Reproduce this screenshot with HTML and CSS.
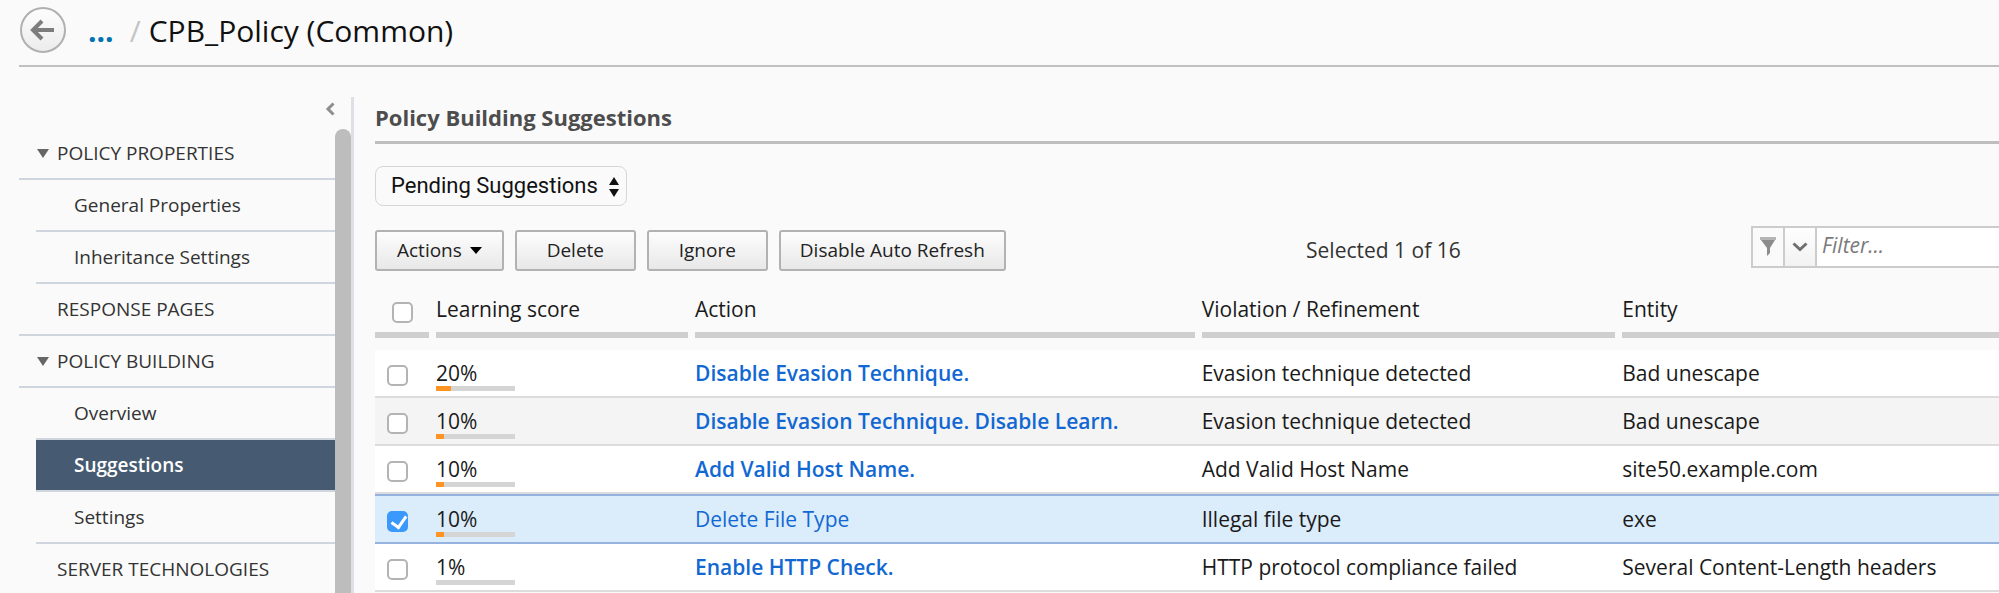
FILE: index.html
```html
<!DOCTYPE html>
<html lang="en">
<head>
<meta charset="utf-8">
<title>CPB_Policy (Common)</title>
<link rel="stylesheet" href="styles.css">
</head>
<body>
<header class="topbar">
  <button class="back" type="button" aria-label="Back">
    <svg viewBox="0 0 42 42" fill="none" stroke="#7d7d7d" stroke-width="4"><path d="M32 21H11M20 12L11 21L20 30"/></svg>
  </button>
  <a class="crumb" href="#">...</a>
  <span class="slash">/</span>
  <h1 class="page-title">CPB_Policy (Common)</h1>
</header>
<div class="layout">
  <nav class="sidebar">
    <button class="collapse" type="button" aria-label="Collapse menu">
      <svg viewBox="0 0 10 14" fill="none" stroke="#8e8e8e" stroke-width="3"><path d="M8.500 1.500L3 7L8.500 12.500"/></svg>
    </button>
    <ul class="menu">
      <li class="group"><a class="open" href="#">POLICY PROPERTIES</a></li>
      <li class="item"><a href="#">General Properties</a></li>
      <li class="item"><a href="#">Inheritance Settings</a></li>
      <li class="group"><a href="#">RESPONSE PAGES</a></li>
      <li class="group"><a class="open" href="#">POLICY BUILDING</a></li>
      <li class="item"><a href="#">Overview</a></li>
      <li class="item current"><a href="#">Suggestions</a></li>
      <li class="item"><a href="#">Settings</a></li>
      <li class="group"><a href="#">SERVER TECHNOLOGIES</a></li>
    </ul>
  </nav>
  <div class="track"></div>
  <main class="main">
    <h2 class="section-title">Policy Building Suggestions</h2>
    <div class="view">
      <select class="view-select" aria-label="Suggestions view"><option>Pending Suggestions</option></select>
      <svg class="view-arrows" viewBox="0 0 10 20" fill="#111"><path d="M5 0L10 8H0ZM0 12H10L5 20Z"/></svg>
    </div>
    <div class="toolbar">
      <div class="buttons">
        <button class="btn btn-menu" type="button">Actions <svg class="caret" viewBox="0 0 12 7"><path d="M0 0H12L6 7Z"/></svg></button>
        <button class="btn" type="button">Delete</button>
        <button class="btn" type="button">Ignore</button>
        <button class="btn" type="button">Disable Auto Refresh</button>
      </div>
      <span class="status">Selected 1 of 16</span>
      <div class="filter">
        <button class="filter-icon" type="button" aria-label="Filter">
          <svg viewBox="0 0 16 19" fill="#8c8c8c"><path fill="#b5b5b5" d="M0 0H16V3H0Z"/><path d="M1 3H15L10 11V16L7 19V11Z"/></svg>
        </button>
        <button class="filter-more" type="button" aria-label="Filter options">
          <svg viewBox="0 0 16 10" fill="none" stroke="#6f6f6f" stroke-width="3"><path d="M1.500 1.500L8 7.500L14.500 1.500"/></svg>
        </button>
        <input class="filter-text" type="text" placeholder="Filter..." aria-label="Filter text">
      </div>
    </div>
    <table class="grid">
      <colgroup><col class="c-check"><col class="c-score"><col class="c-action"><col class="c-violation"><col></colgroup>
      <thead>
        <tr>
          <th><div class="head head-check"><input class="check" type="checkbox" aria-label="Select all"></div></th>
          <th><div class="head">Learning score</div></th>
          <th><div class="head">Action</div></th>
          <th><div class="head">Violation / Refinement</div></th>
          <th><div class="head">Entity</div></th>
        </tr>
      </thead>
      <tbody>
        <tr>
          <td class="pick"><input class="check" type="checkbox" aria-label="Disable Evasion Technique"></td>
          <td>20%<div class="meter"><div class="fill" style="width:19%"></div></div></td>
          <td><a class="link" href="#">Disable Evasion Technique.</a></td>
          <td>Evasion technique detected</td>
          <td>Bad unescape</td>
        </tr>
        <tr class="alt">
          <td class="pick"><input class="check" type="checkbox" aria-label="Disable Evasion Technique, Disable Learn"></td>
          <td>10%<div class="meter"><div class="fill" style="width:10%"></div></div></td>
          <td><a class="link" href="#">Disable Evasion Technique. Disable Learn.</a></td>
          <td>Evasion technique detected</td>
          <td>Bad unescape</td>
        </tr>
        <tr>
          <td class="pick"><input class="check" type="checkbox" aria-label="Add Valid Host Name"></td>
          <td>10%<div class="meter"><div class="fill" style="width:10%"></div></div></td>
          <td><a class="link" href="#">Add Valid Host Name.</a></td>
          <td>Add Valid Host Name</td>
          <td>site50.example.com</td>
        </tr>
        <tr class="selected">
          <td class="pick"><input class="check" type="checkbox" aria-label="Delete File Type" checked></td>
          <td>10%<div class="meter"><div class="fill" style="width:10%"></div></div></td>
          <td><a class="link" href="#">Delete File Type</a></td>
          <td>Illegal file type</td>
          <td>exe</td>
        </tr>
        <tr>
          <td class="pick"><input class="check" type="checkbox" aria-label="Enable HTTP Check"></td>
          <td>1%<div class="meter"></div></td>
          <td><a class="link" href="#">Enable HTTP Check.</a></td>
          <td>HTTP protocol compliance failed</td>
          <td>Several Content-Length headers</td>
        </tr>
      </tbody>
    </table>
  </main>
</div>
</body>
</html>
```
FILE: styles.css
```css
* {
  box-sizing: border-box;
}

body {
  margin: 0;
  height: 100vh;
  display: flex;
  flex-direction: column;
  background: #fafafa;
  color: #1a1a1a;
  font-family: "Open Sans", "Liberation Sans", sans-serif;
  font-size: 21px;
  line-height: 27px;
}

button,
input,
select {
  margin: 0;
  font-family: inherit;
  font-size: inherit;
  line-height: inherit;
  color: inherit;
}

a {
  text-decoration: none;
}

svg {
  display: block;
}

/* Header */
.topbar {
  display: flex;
  flex: none;
  align-items: center;
  height: 67px;
  margin-left: 19px;
  padding: 0 0 5px 1px;
  border-bottom: 2px solid #c0c0c0;
}

.back {
  width: 46px;
  height: 46px;
  padding: 0;
  border: 2px solid #b0b0b0;
  border-radius: 50%;
  background: linear-gradient(#fdfdfd, #ececec);
}

.back svg {
  width: 42px;
  height: 42px;
}

.crumb {
  margin-left: 22px;
  color: #0072b0;
  font-size: 30px;
  font-weight: 700;
}

.slash {
  margin-left: 16px;
  color: #c4c4c4;
  font-size: 30px;
}

.page-title {
  margin: 0 0 0 8px;
  color: #111;
  font-size: 30px;
  font-weight: 400;
}

/* Layout */
.layout {
  display: flex;
  flex: 1;
  min-height: 0;
  overflow: hidden;
  padding-top: 30px;
}

.sidebar {
  flex: none;
  width: 335px;
  padding-left: 19px;
}

.collapse {
  display: block;
  margin: 5px 0 12px auto;
  padding: 0;
  border: 0;
  background: none;
}

.collapse svg {
  width: 10px;
  height: 14px;
}

.track {
  flex: none;
  width: 19px;
  border-right: 3px solid #dde1e6;
}

.track::before {
  content: "";
  display: block;
  height: 100%;
  margin-top: 32px;
  border-radius: 8px 8px 0 0;
  background: #bdbdbd;
}

.menu {
  margin: 0;
  padding: 0;
  list-style: none;
  font-size: 19px;
}

.menu a {
  display: flex;
  align-items: center;
  height: 52px;
  padding-top: 1px;
  color: #333;
  border-bottom: 2px solid #d0d6dd;
}

.group a {
  padding-left: 38px;
}

.group .open {
  padding-left: 18px;
}

.open::before {
  content: "";
  margin-right: 8px;
  border: 6px solid transparent;
  border-top: 9px solid #666;
  border-bottom: 0;
}

.item {
  margin-left: 17px;
}

.item a {
  padding-left: 38px;
}

.current a {
  background: #465b71;
  color: #fff;
  font-weight: 600;
}

/* Main */
.main {
  flex: 1;
  min-width: 0;
  padding-left: 21px;
}

.section-title {
  margin: 0 0 22px;
  padding: 7px 0 10px;
  border-bottom: 3px solid #bebebe;
  color: #4d4d4d;
  font-size: 22px;
  font-weight: 700;
}

.view {
  position: relative;
  width: 252px;
  margin-bottom: 24px;
}

.view-select {
  display: block;
  appearance: none;
  width: 100%;
  height: 40px;
  padding: 0 28px 1px 15px;
  border: 1px solid #d6d6d6;
  border-radius: 8px;
  background: #fafafa;
  color: #111;
  font-family: Roboto, "Liberation Sans", sans-serif;
  font-size: 22px;
}

.view-arrows {
  position: absolute;
  top: 11px;
  right: 8px;
  width: 10px;
  height: 20px;
  pointer-events: none;
}

.toolbar {
  display: flex;
  align-items: center;
  margin-bottom: 23px;
}

.buttons {
  display: flex;
  gap: 11px;
}

.btn {
  min-width: 121px;
  height: 41px;
  padding: 0 19px;
  border: 2px solid #b2b2b2;
  border-radius: 3px;
  background: linear-gradient(#fdfdfd, #e8e8e8);
  color: #222;
  font-size: 19px;
}

.btn-menu {
  display: flex;
  align-items: center;
  gap: 8px;
  padding: 0 20px;
}

.caret {
  width: 12px;
  height: 7px;
}

.status {
  flex: 1;
  padding-left: 10px;
  color: #333;
  text-align: center;
}

.filter {
  display: flex;
  width: 248px;
  height: 42px;
  margin-top: -8px;
  border: 2px solid #ccc;
  border-right: 0;
}

.filter-icon,
.filter-more {
  display: grid;
  place-items: center;
  flex: none;
  width: 32px;
  padding: 0;
  border: 0;
  border-right: 2px solid #ccc;
  background: #fafafa;
}

.filter-icon svg {
  width: 16px;
  height: 19px;
}

.filter-more {
  background: linear-gradient(#fefefe, #f2f2f2);
}

.filter-more svg {
  width: 16px;
  height: 10px;
}

.filter-text {
  flex: 1;
  min-width: 0;
  padding: 0 5px 2px;
  border: 0;
  background: #fff;
}

.filter-text::placeholder {
  color: #7a7a7a;
  font-style: italic;
}

/* Suggestions table */
.grid {
  width: 100%;
  table-layout: fixed;
  border-collapse: separate;
  border-spacing: 0;
}

.c-check { width: 61px; }
.c-score { width: 259px; }
.c-action { width: 31.2%; }
.c-violation { width: 25.9%; }

th {
  padding: 0 7px 12px 0;
  font-weight: 400;
  text-align: left;
}

th:last-child {
  padding-right: 0;
}

.head {
  height: 44px;
  padding-top: 2px;
  border-bottom: 6px solid #cfcfcf;
}

.head-check {
  padding: 8px 0 0 17px;
}

td {
  height: 48px;
  padding: 10px 0 5px;
  border-bottom: 2px solid #dcdcdc;
  background: #fff;
  line-height: 26px;
  vertical-align: top;
}

td.pick {
  padding: 15px 0 0 12px;
}

.alt td {
  background: #f4f4f4;
}

.selected td {
  height: 50px;
  border-top: 2px solid #96b3e0;
  border-bottom-color: #96b3e0;
  background: #dbecfb;
}

.check {
  display: block;
  appearance: none;
  width: 21px;
  height: 21px;
  border: 2px solid #b4b4b4;
  border-radius: 5px;
  background: #fff;
}

.check:checked {
  border-color: #3b99fc;
  background: #3b99fc;
}

.check:checked::before {
  content: "";
  display: block;
  width: 7px;
  height: 12px;
  margin: 0 0 0 5px;
  border: solid #fff;
  border-width: 0 3px 3px 0;
  transform: rotate(35deg);
}

.link {
  color: #1268d3;
  font-weight: 600;
}

.selected .link {
  font-weight: 400;
}

.meter {
  width: 79px;
  height: 5px;
  background: #d5d5d5;
}

.fill {
  height: 100%;
  background: #ff9422;
}
```
